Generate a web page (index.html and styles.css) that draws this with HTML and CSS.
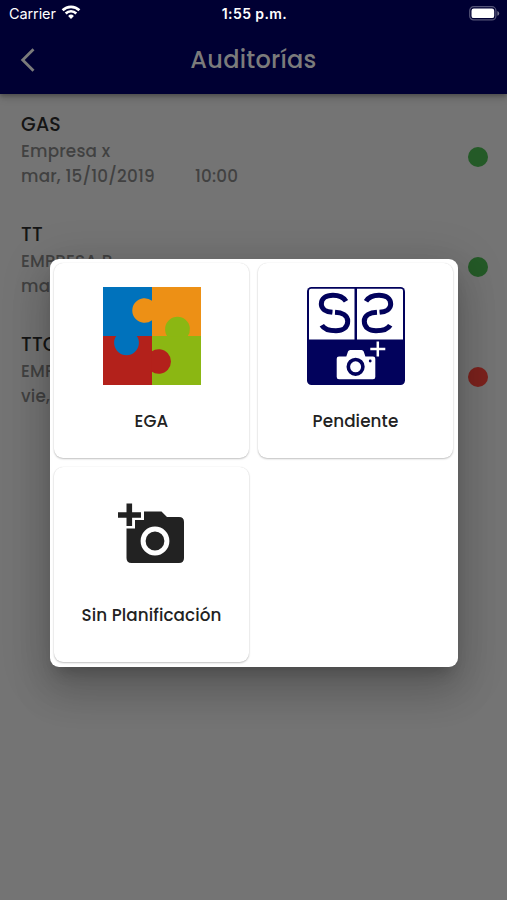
FILE: index.html
```html
<!DOCTYPE html>
<html lang="es">
<head>
<meta charset="utf-8">
<title>Auditorías</title>
<link rel="stylesheet" href="styles.css">
</head>
<body>
<div class="screen">
  <header class="header">
    <div class="status">
      <div class="carrier"><span>Carrier</span>
        <svg width="20" height="15" viewBox="0 0 20 15" fill="none" stroke="#fff" stroke-width="2.6"><path d="M1.6 5.3a12 12 0 0 1 16.8 0M4.7 8.5a7.5 7.5 0 0 1 10.6 0"/><path d="M10 14 7.1 11a4.1 4.1 0 0 1 5.8 0z" fill="#fff" stroke="none"/></svg>
      </div>
      <div class="clock">1:55 p.m.</div>
      <svg class="battery" width="31" height="15" viewBox="0 0 31 15"><rect x=".7" y=".7" width="26.2" height="13.2" rx="4" fill="none" stroke="#555579" stroke-width="1.2"/><rect x="2.5" y="2.5" width="22.7" height="9.6" rx="2.2" fill="#fff"/><path d="M28.4 5v4.8q1.8-.8 1.8-2.4T28.4 5z" fill="#77778f"/></svg>
    </div>
    <div class="bar">
      <svg class="back" width="16" height="24" viewBox="0 0 16 24" fill="none" stroke="#7b7b7b" stroke-width="2.8"><path d="M13.5 1.2 2.7 12l10.8 10.8"/></svg>
      <h1 class="title">Auditorías</h1>
    </div>
  </header>
  <main class="list">
    <article class="row">
      <div><h2>GAS</h2><p>Empresa x</p><p class="date"><span class="day">mar, 15/10/2019</span><span class="hour">10:00</span></p></div>
      <i class="dot green"></i>
    </article>
    <article class="row">
      <div><h2>TT</h2><p>EMPRESA B</p><p>mar,</p></div>
      <i class="dot green"></i>
    </article>
    <article class="row">
      <div><h2>TTC</h2><p>EMPRESA</p><p>vie,</p></div>
      <i class="dot red"></i>
    </article>
  </main>
</div>
<section class="dialog">
  <div class="card">
    <svg class="pic" viewBox="0 0 98 98">
      <path fill="#0072bc" d="M0 0h49v49H0z"/><path fill="#ed9015" d="M49 0h49v49H49z"/><path fill="#b3211b" d="M0 49h49v49H0z"/><path fill="#8bb713" d="M49 49h49v49H49z"/>
      <path fill="#ed9015" d="M49 13.7A12.3 12.3 0 1 0 49 33.3h2V13.7z"/>
      <path fill="#8bb713" d="M64.5 49.5A12.4 12.4 0 1 1 84.5 49.5z"/>
      <path fill="#0072bc" d="M13.5 48.5A12.4 12.4 0 1 0 33.5 48.5z"/>
      <path fill="#b3211b" d="M48.5 64.5A12.3 12.3 0 1 1 48.5 84.5z"/>
    </svg>
    <span class="label">EGA</span>
  </div>
  <div class="card">
    <svg class="pic" viewBox="0 0 98 98">
      <rect width="98" height="98" rx="4.5" fill="#02025c"/>
      <path fill="#fff" d="M4 1.8h43.5v50.7H2V3.8a2 2 0 0 1 2-2zM50 1.8h44a2 2 0 0 1 2 2v48.7H50z"/>
      <g fill="none" stroke="#02025c" stroke-width="5">
        <path d="M39 14.3C36 9.500 31 8.300 26 8.300C19 8.300 14.300 11.500 14.300 17C14.300 22 19 25 25.500 25.300M28 25.200C35 25.500 40.700 28.500 40.700 34.200C40.700 40.500 35.500 43.700 29 43.700C22 43.700 17 42 14.800 38.200"/>
        <path d="M59 14.3C62 9.500 67 8.300 72 8.300C79 8.300 83.700 11.500 83.700 17C83.700 22 79 25 72.500 25.300M70 25.200C63 25.500 57.300 28.500 57.300 34.200C57.300 40.500 62.500 43.700 69 43.700C76 43.700 81 42 83.200 38.200"/>
        <path d="M25.900 28.500 27.700 22M72.100 28.500 70.300 22" stroke="#fff" stroke-width="1.500"/>
      </g>
      <path fill="#fff" d="M32 69.500h7.300l1.700-5q.6-1.500 2.200-1.500h11.300q1.600 0 2.200 1.500l1.700 5H66q2.300 0 2.300 2.300V90q0 2.300-2.300 2.300H32q-2.300 0-2.300-2.300V71.800q0-2.300 2.300-2.300z"/>
      <circle cx="48.600" cy="79.800" r="7.300" fill="#fff" stroke="#02025c" stroke-width="3.600"/>
      <circle cx="63.200" cy="74" r="1.400" fill="#02025c"/>
      <path d="M70.800 54.500v15M63.300 62h15" stroke="#02025c" stroke-width="5"/>
      <path d="M70.800 54.500v15M63.300 62h15" stroke="#fff" stroke-width="2.500"/>
    </svg>
    <span class="label">Pendiente</span>
  </div>
  <div class="card">
    <svg class="pic short" viewBox="0 0 98 88">
      <path fill="#222" d="M41 20.500h17.500l5.500 5.500h12q5 0 5 5v36q0 5-5 5H28.500q-5 0-5-5V37.500h8.500V29h9z"/>
      <circle cx="52" cy="50" r="11.900" fill="#222" stroke="#fff" stroke-width="5"/>
      <path stroke="#222" stroke-width="5.600" fill="none" d="M26.300 12.500v22.500M15 24h23"/>
    </svg>
    <span class="label">Sin Planificación</span>
  </div>
</section>
</body>
</html>
```

FILE: styles.css
```css
* { box-sizing: border-box; }
body, h1, h2, p { margin: 0; font-weight: 400; }
body {
  position: relative;
  width: 507px;
  height: 900px;
  overflow: hidden;
  background: #747474;
  font-family: Poppins, Inter, sans-serif;
}
.header {
  height: 94px;
  background: #000033;
  box-shadow: 0 2px 4px rgba(0, 0, 0, .25), 0 4px 8px rgba(0, 0, 0, .14);
}
.status {
  display: grid;
  grid-template-columns: 1fr auto 1fr;
  align-items: center;
  height: 27px;
  padding: 0 7px 0 9px;
  color: #fff;
  font: 14.500px Inter, sans-serif;
}
.carrier { display: flex; align-items: center; gap: 5px; letter-spacing: -.1px; }
.carrier svg { margin-top: -2px; }
.clock { font-weight: 600; font-size: 14px; letter-spacing: .4px; }
.battery { justify-self: end; }
.bar {
  display: grid;
  grid-template-columns: 1fr auto 1fr;
  align-items: center;
  height: 65px;
  padding: 0 20px;
}
.title { color: #7b7b7b; font-size: 24px; font-weight: 500; letter-spacing: .25px; }
.list { display: flex; flex-direction: column; }
.row {
  display: flex;
  align-items: center;
  justify-content: space-between;
  height: 110px;
  padding: 0 19px 0 21px;
}
.row:first-child { margin-top: 8px; }
.row > div { margin-top: -14px; }
.row h2 { color: #151515; font-size: 19px; font-weight: 500; line-height: 28px; letter-spacing: .2px; }
.row p { color: #414141; font-size: 16.800px; font-weight: 500; line-height: 25.500px; letter-spacing: .2px; }
.date { display: flex; }
.day { width: 174px; }
.dot { width: 20px; height: 20px; border-radius: 50%; }
.green { background: #245a27; }
.red { background: #7c221d; }
.dialog {
  position: absolute;
  left: 50px;
  top: 259px;
  display: grid;
  grid-template-columns: 195px 195px;
  grid-template-rows: 195px 195px;
  gap: 9px;
  width: 408px;
  height: 408px;
  padding: 4px;
  border-radius: 9px;
  background: #fff;
  box-shadow: 0 11px 15px -7px rgba(0, 0, 0, .2), 0 24px 38px 3px rgba(0, 0, 0, .14), 0 9px 46px 8px rgba(0, 0, 0, .12);
}
.card {
  display: flex;
  flex-direction: column;
  align-items: center;
  padding-top: 24px;
  border-radius: 9px;
  background: #fff;
  box-shadow: 0 1px 2px rgba(0, 0, 0, .24), 0 0 1px rgba(0, 0, 0, .12);
}
.pic { width: 98px; height: 98px; }
.short { height: 88px; }
.label { margin-top: 23px; color: #222; font-size: 16.800px; font-weight: 500; line-height: 26px; letter-spacing: .1px; white-space: nowrap; }
```
